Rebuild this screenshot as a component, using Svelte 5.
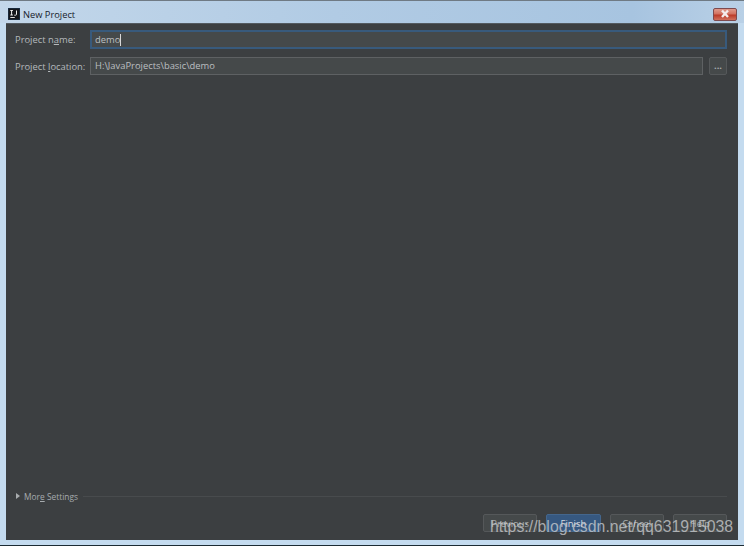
<script>
  let name = 'demo';
  let location = 'H:\\JavaProjects\\basic\\demo';
  const buttons = [
    { label: 'Previous' },
    { label: 'Finish', primary: true },
    { label: 'Cancel' },
    { label: 'Help' }
  ];
</script>

<div class="window">
  <header class="titlebar">
    <svg class="logo" width="12" height="12" viewBox="0 0 12 12">
      <rect width="12" height="12" fill="#1d3a58" />
      <rect x="0.500" y="0.500" width="11" height="11" fill="#14161b" />
      <path d="M2.300 2.500h2.600M3.600 2.500v4.500M2.300 7h2.600M8.500 2.500v3.800q0 .9-1 .9H6.300" fill="none" stroke="#eeeeee" stroke-width="1" />
      <rect x="2.300" y="9" width="4.500" height="1" fill="#dddddd" />
    </svg>
    <span class="title">New Project</span>
    <div class="close">
      <svg width="12" height="10" viewBox="0 0 12 10">
        <path d="M3 1.500l6 6.500M9 1.500l-6 6.500" stroke="#f4ecec" stroke-width="2.400" fill="none" />
      </svg>
    </div>
  </header>

  <main class="content">
    <div class="form">
      <div class="row name-row">
        <label for="name">Project n<u>a</u>me:</label>
        <div class="input focused">
          <span>{name}</span><i class="caret"></i>
        </div>
      </div>
      <div class="row">
        <label for="location">Project <u>l</u>ocation:</label>
        <div class="input">{location}</div>
        <button class="browse">...</button>
      </div>
    </div>

    <div class="spacer"></div>

    <div class="more">
      <span class="arrow"></span>
      <span class="more-label">Mor<u>e</u> Settings</span>
      <span class="line"></span>
    </div>

    <footer class="actions">
      {#each buttons as b}
        <button class:primary={b.primary}>{b.label}</button>
      {/each}
    </footer>
  </main>

  <div class="watermark">https://blog.csdn.net/qq631915038</div>
</div>

<style>
  :global(body) {
    margin: 0;
    background: #1c2b33;
  }

  .window {
    position: relative;
    width: 744px;
    height: 545px;
    box-sizing: border-box;
    display: flex;
    flex-direction: column;
    padding: 0 6px 5px 5px;
    background: #c4dbef;
    border-top: 1px solid #6f7a84;
    font-family: "Open Sans", "Noto Sans", sans-serif;
    font-size: 9.400px;
    color: #b4b9bc;
    overflow: hidden;
  }

  .titlebar {
    height: 22px;
    flex: none;
    display: flex;
    align-items: center;
    margin: 0 -6px 0 -5px;
    padding: 4px 7px 0 8px;
    box-sizing: border-box;
    background: linear-gradient(90deg, #c3d7ea 0, #b1cbe4 45%, #a7c4e0 85%, #b9d0e6 100%);
  }

  .logo {
    margin-right: 3px;
    flex: none;
  }

  .title {
    color: #16202a;
    font-size: 9.300px;
  }

  .close {
    margin-left: auto;
    width: 22px;
    height: 11px;
    display: flex;
    align-items: center;
    justify-content: center;
    border: 1px solid #7e4a4e;
    border-radius: 2px;
    background: linear-gradient(180deg, #e09a8c 0, #d2705f 45%, #bb3a28 55%, #d0705c 100%);
  }

  .content {
    flex: 1;
    min-height: 0;
    display: flex;
    flex-direction: column;
    margin-left: 1px;
    background: #3c3f41;
    border-top: 1px solid #535a60;
    padding: 6px 11px 8px 9px;
  }

  .form {
    display: flex;
    flex-direction: column;
    gap: 8px;
  }

  .row {
    display: flex;
    align-items: center;
  }

  label {
    width: 75px;
    flex: none;
    white-space: nowrap;
  }

  .input {
    flex: 1;
    height: 18px;
    box-sizing: border-box;
    display: flex;
    align-items: center;
    padding: 0 4px 1px;
    border: 1px solid #5e6163;
    background: #45494a;
    color: #bbbfc1;
  }

  .input.focused {
    height: 19px;
    border: 2px solid #385a7c;
    padding: 0 3px;
  }

  .caret {
    width: 1px;
    height: 12px;
    background: #d8d8d8;
  }

  .browse {
    width: 18px;
    height: 18px;
    margin-left: 6px;
    padding: 0 0 1px;
    flex: none;
    font: inherit;
    font-weight: 700;
    color: #a9adaf;
    background: #45494a;
    border: 1px solid #55585a;
    border-radius: 2px;
  }

  .spacer {
    flex: 1;
  }

  .more {
    display: flex;
    align-items: center;
    height: 12px;
  }

  .arrow {
    width: 0;
    height: 0;
    margin: 0 4px 0 1px;
    border-left: 4px solid #a9adaf;
    border-top: 3px solid transparent;
    border-bottom: 3px solid transparent;
  }

  .more-label {
    white-space: nowrap;
    font-size: 8.400px;
    color: #a6abae;
  }

  .line {
    flex: 1;
    height: 1px;
    margin-left: 5px;
    background: #484b4d;
  }

  .actions {
    display: flex;
    justify-content: flex-end;
    gap: 9px;
    margin-top: 12px;
  }

  .actions button {
    width: 54.250px;
    height: 18px;
    padding: 0;
    font: inherit;
    color: #a9adaf;
    background: #45494a;
    border: 1px solid #55585a;
    border-radius: 2px;
  }

  .actions button.primary {
    color: #d6dce2;
    background: #365880;
    border-color: #44668c;
  }

  .watermark {
    position: absolute;
    left: 490px;
    top: 516px;
    font-family: "Liberation Sans", Arial, sans-serif;
    font-size: 15.850px;
    line-height: 20px;
    white-space: nowrap;
    color: rgba(206, 208, 210, 0.75);
  }
</style>
